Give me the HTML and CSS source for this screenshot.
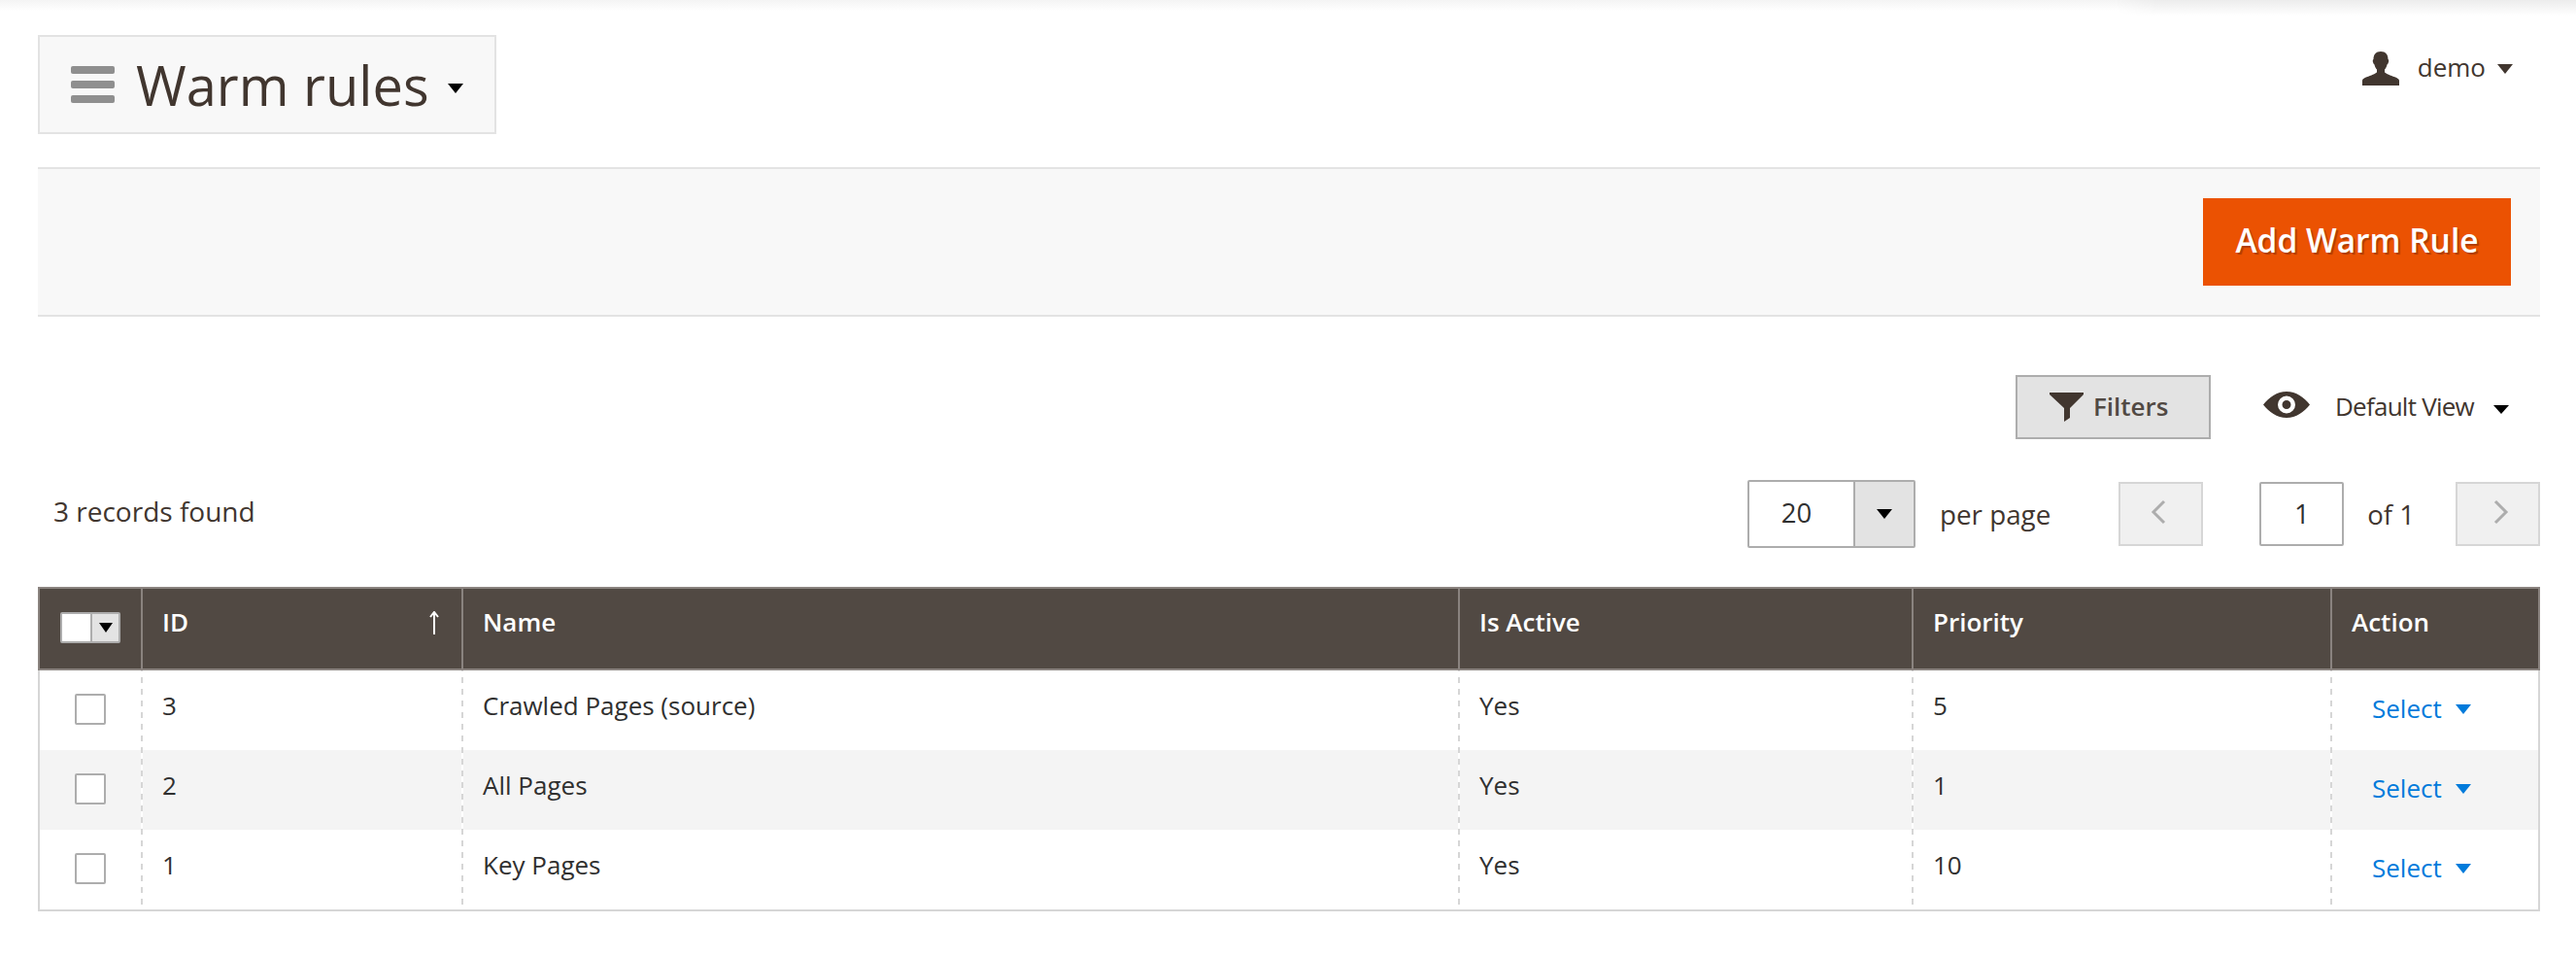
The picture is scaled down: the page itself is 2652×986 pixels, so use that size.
FILE: index.html
```html
<!DOCTYPE html>
<html lang="en">
<head>
<meta charset="utf-8">
<title>Warm rules</title>
<link rel="stylesheet" href="styles.css">
</head>
<body>
<div class="top-shadow"></div>
<header class="page-header">
  <div class="title-box">
    <span class="burger"><i></i><i></i><i></i></span>
    <h1 class="title">Warm rules</h1>
    <span class="caret caret-title"></span>
  </div>
  <div class="user">
    <svg class="user-icon" viewBox="0 0 38 35" aria-hidden="true"><path d="M19 0c5 0 7.500 3.200 7.500 8 .9.300 1 2.200.1 4-.4 1-.8 1.300-1.100 1.400-.5 2.400-1.500 4.100-2.500 5.100v2.700c1.500 1.800 6 3.200 10.500 5.100 2.500 1.100 4.500 2 4.500 3.700V35H0v-5c0-1.700 2-2.600 4.500-3.700 4.500-1.900 9-3.300 10.500-5.100v-2.700c-1-1-2-2.700-2.500-5.100-.3-.1-.7-.4-1.100-1.400-.9-1.800-.8-3.700.1-4C11.500 3.200 14 0 19 0z"/></svg>
    <span class="user-name">demo</span>
    <span class="caret caret-user"></span>
  </div>
</header>

<section class="actions-bar">
  <button class="btn-primary" type="button">Add Warm Rule</button>
</section>

<section class="controls">
  <button class="btn-filters" type="button">
    <svg class="filter-icon" viewBox="0 0 35 30" aria-hidden="true"><path d="M0 0h35v2L21 16v10l-6 4V16L0 2z"/></svg>
    Filters
  </button>
  <div class="view">
    <svg class="eye-icon" viewBox="0 0 48 27" aria-hidden="true"><path fill-rule="evenodd" d="M24 0c10 0 18 6 24 13.500C42 21 34 27 24 27S6 21 0 13.500C6 6 14 0 24 0zm0 4.500a9 9 0 1 0 0 18 9 9 0 0 0 0-18zm0 4.500a4.500 4.500 0 1 1 0 9 4.500 4.500 0 0 1 0-9z"/></svg>
    <span class="view-name">Default View</span>
    <span class="caret caret-view"></span>
  </div>
</section>

<section class="pager-row">
  <div class="records">3 records found</div>
  <div class="per-page-select">
    <span class="per-page-value">20</span>
    <span class="per-page-toggle"><span class="caret caret-select"></span></span>
  </div>
  <span class="per-page-label">per page</span>
  <button class="page-btn page-prev" type="button" aria-label="Previous">
    <svg class="chevron" viewBox="0 0 16 26" aria-hidden="true"><polyline points="14,2 3,13 14,24"/></svg>
  </button>
  <div class="page-input">1</div>
  <span class="page-of">of 1</span>
  <button class="page-btn page-next" type="button" aria-label="Next">
    <svg class="chevron" viewBox="0 0 16 26" aria-hidden="true"><polyline points="2,2 13,13 2,24"/></svg>
  </button>
</section>

<table class="grid">
  <colgroup>
    <col class="col-check"><col class="col-id"><col class="col-name"><col class="col-active"><col class="col-priority"><col class="col-action">
  </colgroup>
  <thead>
    <tr>
      <th class="cell-check">
        <div class="multi"><span class="multi-box"></span><span class="multi-toggle"><span class="caret caret-multi"></span></span></div>
      </th>
      <th class="cell-sorted">ID
        <svg class="sort-arrow" viewBox="0 0 12 24" aria-hidden="true"><path d="M6 1v23M2 6l4-5 4 5"/></svg>
      </th>
      <th>Name</th>
      <th>Is Active</th>
      <th>Priority</th>
      <th>Action</th>
    </tr>
  </thead>
  <tbody>
    <tr>
      <td class="cell-check"><span class="checkbox"></span></td>
      <td>3</td><td>Crawled Pages (source)</td><td>Yes</td><td>5</td>
      <td class="cell-action"><a class="select-link" href="#">Select<span class="caret caret-link"></span></a></td>
    </tr>
    <tr class="row-alt">
      <td class="cell-check"><span class="checkbox"></span></td>
      <td>2</td><td>All Pages</td><td>Yes</td><td>1</td>
      <td class="cell-action"><a class="select-link" href="#">Select<span class="caret caret-link"></span></a></td>
    </tr>
    <tr>
      <td class="cell-check"><span class="checkbox"></span></td>
      <td>1</td><td>Key Pages</td><td>Yes</td><td>10</td>
      <td class="cell-action"><a class="select-link" href="#">Select<span class="caret caret-link"></span></a></td>
    </tr>
  </tbody>
</table>
</body>
</html>
```
FILE: styles.css
```css
* { box-sizing: border-box; }
html, body { margin: 0; background: #fff; }
body {
  padding: 0 37px 0 39px;
  font-family: "Open Sans", "Noto Sans", sans-serif;
  font-size: 26px;
  color: #41362f;
  position: relative;
  height: 986px;
  overflow: hidden;
}
.top-shadow {
  position: absolute;
  left: 0; right: 0; top: 0;
  height: 16px;
  background: linear-gradient(#f4f4f4, #ffffff 70%);
}
.top-shadow::after {
  content: "";
  position: absolute;
  right: 0; top: 0;
  width: 473px;
  height: 16px;
  background: linear-gradient(#ececec, #ffffff);
  mask-image: linear-gradient(to right, transparent, #000 40px);
}
.caret {
  display: block;
  width: 0; height: 0;
  border-style: solid;
  border-color: #000 transparent transparent transparent;
}

/* header */
.page-header {
  height: 172px;
  padding-top: 36px;
  display: flex;
  justify-content: space-between;
  align-items: flex-start;
}
.title-box {
  width: 472px;
  height: 102px;
  background: #f8f8f8;
  border: 2px solid #e3e3e3;
  display: flex;
  align-items: center;
  padding-left: 32px;
}
.burger { display: flex; flex-direction: column; gap: 7px; width: 45px; }
.burger i { display: block; height: 8px; border-radius: 2px; background: #8f8f8f; }
.title {
  margin: 0 0 0 22px;
  font-size: 56px;
  font-weight: 400;
  line-height: 76px;
  color: #41362f;
}
.caret-title { margin: 7px 0 0 19px; border-width: 10px 8px 0 8px; }
.user {
  display: flex;
  align-items: center;
  margin: 17px 28px 0 0;
  height: 35px;
}
.user-icon { width: 38px; height: 35px; fill: #41362f; }
.user-name { margin-left: 19px; font-size: 26px; line-height: 33px; margin-top: -3px; }
.caret-user { margin: 0 0 0 12px; border-width: 10px 8px 0 8px; border-top-color: #41362f; }

/* actions */
.actions-bar {
  height: 154px;
  background: #f8f8f8;
  border-top: 2px solid #e3e3e3;
  border-bottom: 2px solid #e3e3e3;
  padding: 30px 30px 30px 0;
  display: flex;
  justify-content: flex-end;
}
.btn-primary {
  width: 317px;
  height: 90px;
  border: 0;
  background: #eb5202;
  color: #fff;
  font-family: inherit;
  font-size: 33.500px;
  font-weight: 600;
  line-height: 86px;
  padding: 0 0 4px;
  text-shadow: 2px 2px 1px rgba(0,0,0,.25);
}

/* filters row */
.controls {
  margin-top: 60px;
  padding-right: 32px;
  height: 66px;
  display: flex;
  justify-content: flex-end;
  align-items: center;
}
.btn-filters {
  width: 201px;
  height: 66px;
  background: #e3e3e3;
  border: 2px solid #adadad;
  display: flex;
  align-items: center;
  padding: 0 0 2px 33px;
  gap: 10px;
  font-family: inherit;
  font-size: 26px;
  font-weight: 600;
  color: #514943;
}
.filter-icon { width: 35px; height: 30px; fill: #41362f; margin-top: 2px; }
.view { display: flex; align-items: center; margin-left: 54px; }
.eye-icon { width: 48px; height: 27px; fill: #41362f; margin-top: -6px; }
.view-name { margin-left: 26px; font-size: 26px; letter-spacing: -0.750px; margin-top: -2px; }
.caret-view { margin: 4px 0 0 20px; border-width: 9px 8px 0 8px; }

/* pager row */
.pager-row {
  margin-top: 42px;
  height: 70px;
  display: flex;
  align-items: center;
}
.records { padding-left: 16px; font-size: 28px; margin-right: auto; margin-top: -6px; }
.per-page-select {
  width: 173px;
  height: 70px;
  display: flex;
  border: 2px solid #adadad;
  border-radius: 2px;
}
.per-page-value {
  width: 107px;
  text-align: center;
  line-height: 64px;
  font-size: 27.500px;
  color: #303030;
  padding-right: 10px;
}
.per-page-toggle {
  flex: 1;
  background: #e3e3e3;
  border-left: 2px solid #adadad;
  display: flex;
  align-items: center;
  justify-content: center;
}
.caret-select { border-width: 10px 8px 0 8px; }
.per-page-label { margin-left: 25px; font-size: 27.800px; }
.page-btn {
  width: 87px;
  height: 66px;
  background: #f0f0f0;
  border: 2px solid #d6d6d6;
  padding: 0;
  display: flex;
  align-items: center;
  justify-content: center;
  margin-top: 0;
}
.page-prev { margin-left: 70px; }
.page-next { margin-left: 42px; }
.chevron { width: 16px; height: 26px; fill: none; stroke: #adadad; stroke-width: 3; margin-top: -4px; }
.page-prev .chevron { margin-right: 6px; }
.page-next .chevron { margin-left: 6px; }
.page-input {
  margin-left: 58px;
  width: 87px;
  height: 66px;
  border: 2px solid #adadad;
  border-radius: 2px;
  text-align: center;
  line-height: 62px;
  font-size: 27.500px;
  color: #303030;
}
.page-of { margin-left: 24px; font-size: 27.500px; }

/* table */
.grid {
  margin-top: 40px;
  width: 2576px;
  border-collapse: separate;
  border-spacing: 0;
  table-layout: fixed;
  font-size: 26px;
  color: #303030;
}
.col-check { width: 106px; }
.col-id { width: 330px; }
.col-name { width: 1026px; }
.col-active { width: 467px; }
.col-priority { width: 431px; }
.col-action { width: 216px; }
.grid th {
  height: 86px;
  background: #514943;
  color: #fff;
  font-weight: 600;
  text-align: left;
  vertical-align: top;
  padding: 18px 0 0 20px;
  line-height: 33px;
  border-top: 2px solid #8a837f;
  border-bottom: 2px solid #8a837f;
  border-left: 2px solid #8a837f;
}
.grid th:last-child { border-right: 2px solid #8a837f; }
.grid td {
  height: 82px;
  vertical-align: top;
  padding: 20px 0 0 22px;
  line-height: 33px;
  background-image: linear-gradient(#d6d6d6 0 6.500px, #ffffff 6.500px);
  background-size: 2px 12px;
  background-repeat: repeat-y;
  background-position: 0 7px;
}
.grid tbody tr:nth-child(2) td { background-position-y: 9px; }
.grid tbody tr:nth-child(3) td { background-position-y: 11px; }
.grid td:first-child { border-left: 2px solid #d6d6d6; background-image: none; }
.grid td:last-child { border-right: 2px solid #d6d6d6; }
.grid tbody tr:last-child td { height: 84px; border-bottom: 2px solid #d6d6d6; }
.row-alt td { background-color: #f4f4f4; }
.grid .cell-check { padding: 0; text-align: center; vertical-align: middle; }
.cell-sorted { position: relative; }
.sort-arrow {
  position: absolute;
  right: 22px;
  top: 23px;
  width: 12px;
  height: 24px;
  fill: none;
  stroke: #fff;
  stroke-width: 2;
}
.multi {
  width: 62px;
  height: 32px;
  margin: 0 auto;
  display: flex;
  border: 2px solid #adadad;
  border-radius: 2px;
  background: #fff;
}
.grid th.cell-check { vertical-align: top; padding-top: 24px; }
.multi-box { width: 29px; background: #fff; }
.multi-toggle {
  flex: 1;
  background: #e3e3e3;
  border-left: 2px solid #adadad;
  display: flex;
  align-items: center;
  justify-content: center;
}
.caret-multi { border-width: 10px 7px 0 7px; }
.checkbox {
  display: block;
  width: 32px;
  height: 32px;
  margin: -3px auto 0;
  background: #fff;
  border: 2px solid #adadad;
  border-radius: 2px;
}
.grid .cell-action { padding: 23px 0 0 43px; }
.select-link {
  color: #007bdb;
  text-decoration: none;
  display: inline-flex;
  align-items: center;
}
.caret-link { margin: 0 0 0 14px; border-width: 10px 8px 0 8px; border-top-color: #007bdb; }
```
